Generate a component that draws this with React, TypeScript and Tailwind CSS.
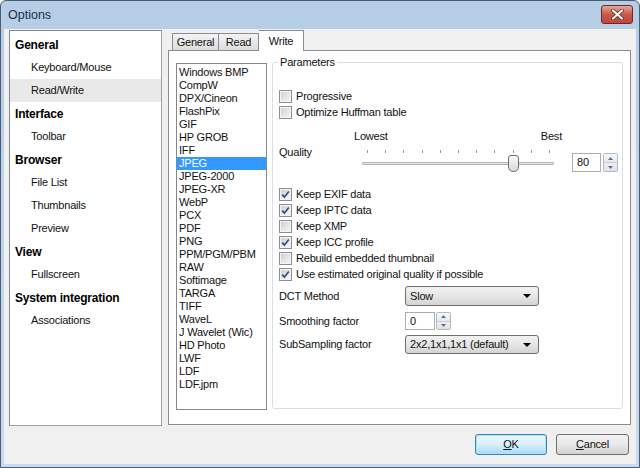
import React from "react";

const tree = [
  { label: "General", header: true },
  { label: "Keyboard/Mouse" },
  { label: "Read/Write", selected: true },
  { label: "Interface", header: true },
  { label: "Toolbar" },
  { label: "Browser", header: true },
  { label: "File List" },
  { label: "Thumbnails" },
  { label: "Preview" },
  { label: "View", header: true },
  { label: "Fullscreen" },
  { label: "System integration", header: true },
  { label: "Associations" },
];

const formats = [
  "Windows BMP",
  "CompW",
  "DPX/Cineon",
  "FlashPix",
  "GIF",
  "HP GROB",
  "IFF",
  "JPEG",
  "JPEG-2000",
  "JPEG-XR",
  "WebP",
  "PCX",
  "PDF",
  "PNG",
  "PPM/PGM/PBM",
  "RAW",
  "Softimage",
  "TARGA",
  "TIFF",
  "WaveL",
  "J Wavelet (Wic)",
  "HD Photo",
  "LWF",
  "LDF",
  "LDF.jpm",
];

const checks = [
  { label: "Keep EXIF data", checked: true },
  { label: "Keep IPTC data", checked: true },
  { label: "Keep XMP", checked: false },
  { label: "Keep ICC profile", checked: true },
  { label: "Rebuild embedded thumbnail", checked: false },
  { label: "Use estimated original quality if possible", checked: true },
];

function CheckBox({ label, checked }: { label: string; checked: boolean }) {
  return (
    <div className="flex h-[16px] items-center">
      <span className="flex h-[13px] w-[13px] items-center justify-center border border-[#8e8f8f] bg-white">
        <span className="flex h-[11px] w-[11px] items-center justify-center border border-[#f4f4f4] bg-linear-to-br from-[#cfd1d5] to-[#f6f6f6]">
          {checked && (
            <svg width="9" height="9" viewBox="0 0 9 9">
              <path d="M1.2 4.6 L3.4 7 L7.8 1.4" fill="none" stroke="#2d4a86" strokeWidth="1.6" />
            </svg>
          )}
        </span>
      </span>
      <span className="ml-[4px]">{label}</span>
    </div>
  );
}

function Spinner() {
  return (
    <div className="flex h-full w-[15px] flex-col rounded-[2px] border border-[#b4b9c0]">
      <div className="flex flex-1 items-center justify-center border-b border-[#c8ccd2] bg-linear-to-b from-[#f7f8fa] to-[#e6e9ee]">
        <svg width="5" height="3" viewBox="0 0 5 3">
          <path d="M0 3 L2.5 0 L5 3 Z" fill="#5b6f94" />
        </svg>
      </div>
      <div className="flex flex-1 items-center justify-center bg-linear-to-b from-[#eef0f3] to-[#dfe3e8]">
        <svg width="5" height="3" viewBox="0 0 5 3">
          <path d="M0 0 L2.5 3 L5 0 Z" fill="#5b6f94" />
        </svg>
      </div>
    </div>
  );
}

function Combo({ value }: { value: string }) {
  return (
    <div className="flex h-full w-[134px] items-center justify-between rounded-[3px] border border-[#707070] bg-linear-to-b from-[#f2f2f2] via-[#e6e6e6] to-[#d4d4d4] pl-[4px] pr-[7px]">
      <span>{value}</span>
      <svg width="8" height="4" viewBox="0 0 8 4">
        <path d="M0 0 L8 0 L4 4 Z" fill="#000" />
      </svg>
    </div>
  );
}

function Slider() {
  const ticks = Array.from({ length: 11 }, (_, i) => 5 + i * 18.2);
  return (
    <div className="relative h-[30px] w-[192px]">
      {ticks.map((x, i) => (
        <div key={i} className="absolute top-[4px] h-[3px] w-px bg-[#9a9a9a]" style={{ left: x }} />
      ))}
      <div className="absolute left-0 right-0 top-[16px] h-[3px] rounded-[1px] border border-[#b0b0b0] bg-[#e7eaea]" />
      <div className="absolute left-[146px] top-[9px] h-[17px] w-[11px] rounded-[3px] rounded-b-[5px] border border-[#707070] bg-linear-to-b from-[#fafafa] to-[#d8d8d8]" />
    </div>
  );
}

export default function App() {
  return (
    <div className="flex h-[468px] w-[640px] flex-col overflow-hidden rounded-t-[6px] border border-[#4b5d70] bg-linear-to-b from-[#b6cde6] to-[#c8dbef] font-['Liberation_Sans',Arial,sans-serif] text-[11px] tracking-[-0.2px] text-[#111]">
      {/* title bar */}
      <div className="relative flex h-[28px] shrink-0 items-center pl-[7px]">
        <span className="text-[12.5px] tracking-normal text-[#1b2f48]">Options</span>
        <div className="absolute left-[600px] top-[4px] flex h-[19px] w-[32px] items-center justify-center rounded-[3px] border border-[#6a2b25] bg-linear-to-b from-[#e6a69b] via-[#c9574a] to-[#c0473a]">
          <svg width="13" height="11" viewBox="0 0 13 11">
            <path d="M2 1.5 L11 9.5 M11 1.5 L2 9.5" stroke="#5a231e" strokeWidth="3.6" strokeLinecap="round" />
            <path d="M2 1.5 L11 9.5 M11 1.5 L2 9.5" stroke="#fff" strokeWidth="2.2" strokeLinecap="round" />
          </svg>
        </div>
      </div>

      {/* client area */}
      <div className="mx-[3px] mb-[3px] flex flex-1 flex-col bg-[#f0f0f0] px-[5px] pt-[1px]">
        <div className="flex">
          {/* tree */}
          <div className="h-[396px] w-[153px] shrink-0 border border-[#828790] border-r-[#a0a0a0] border-b-[#a0a0a0] bg-white pt-[2px]">
            {tree.map((t) => (
              <div
                key={t.label}
                className={`flex h-[23px] items-center ${
                  t.header ? "pl-[5px] text-[12px] font-bold text-black" : "pl-[21px]"
                } ${t.selected ? "bg-[#e9e9e9]" : ""}`}
              >
                {t.label}
              </div>
            ))}
          </div>

          {/* tab control */}
          <div className="ml-[6px] flex w-[464px] flex-col">
            <div className="flex h-[20px] items-end pl-[4px]">
              <div className="flex h-[17px] w-[47px] items-center justify-center border border-b-0 border-[#898c95] bg-linear-to-b from-[#f4f4f4] to-[#dcdcdc]">
                General
              </div>
              <div className="flex h-[17px] w-[40px] items-center justify-center border border-b-0 border-l-0 border-[#898c95] bg-linear-to-b from-[#f4f4f4] to-[#dcdcdc]">
                Read
              </div>
              <div className="relative z-10 -mb-px flex h-[21px] w-[45px] items-start justify-center border border-b-0 border-l-0 border-[#898c95] bg-white pt-[2px]">
                Write
              </div>
            </div>
            <div className="flex h-[375px] border border-[#898c95] bg-white pl-[7px] pt-[11px]">
              {/* listbox */}
              <div className="mt-[1px] h-[347px] w-[91px] shrink-0 border border-[#828790] pt-[2px]">
                {formats.map((f) => (
                  <div
                    key={f}
                    className={`flex h-[13px] items-center pl-[2px] ${
                      f === "JPEG" ? "bg-[#3399ff] text-white" : ""
                    }`}
                  >
                    {f}
                  </div>
                ))}
              </div>

              {/* group box */}
              <div className="relative ml-[5px] h-[347px] w-[351px] rounded-[3px] border border-[#d5dfe5] pl-[6px] pt-[25px]">
                <span className="absolute -top-[7px] left-[5px] bg-white px-[2px] leading-[13px]">
                  Parameters
                </span>
                <CheckBox label="Progressive" checked={false} />
                <CheckBox label="Optimize Huffman table" checked={false} />

                <div className="mt-[10px] flex h-[12px] items-center">
                  <span className="ml-[75px]">Lowest</span>
                  <span className="ml-auto mr-[60px]">Best</span>
                </div>

                <div className="mt-[4px] flex h-[30px] items-start">
                  <span className="w-[83px] leading-[13px]">Quality</span>
                  <Slider />
                  <div className="ml-[18px] mt-[7px] flex h-[19px]">
                    <div className="flex h-full w-[29px] items-center border border-[#abadb3] bg-white pl-[4px]">
                      80
                    </div>
                    <div className="ml-[2px] h-full">
                      <Spinner />
                    </div>
                  </div>
                </div>

                <div className="mt-[10px]">
                  {checks.map((c) => (
                    <CheckBox key={c.label} label={c.label} checked={c.checked} />
                  ))}
                </div>

                <div className="mt-[4px] flex h-[20px] items-center">
                  <span className="w-[126px]">DCT Method</span>
                  <Combo value="Slow" />
                </div>

                <div className="mt-[6px] flex h-[18px] items-center">
                  <span className="w-[126px]">Smoothing factor</span>
                  <div className="flex h-full">
                    <div className="flex h-full w-[30px] items-center border border-[#abadb3] bg-white pl-[4px]">
                      0
                    </div>
                    <div className="ml-[1px] h-full">
                      <Spinner />
                    </div>
                  </div>
                </div>

                <div className="mt-[5px] flex h-[19px] items-center">
                  <span className="w-[126px]">SubSampling factor</span>
                  <Combo value="2x2,1x1,1x1 (default)" />
                </div>
              </div>
            </div>
          </div>
        </div>

        {/* buttons */}
        <div className="mt-[8px] flex justify-end gap-[9px] pr-[2px]">
          <button className="h-[21px] w-[72px] rounded-[3px] border border-[#3c7fb1] bg-linear-to-b from-[#eaf6fd] via-[#d9f0fc] to-[#a7d9f5] shadow-[inset_0_0_0_1px_#aee4fa]">
            <span className="underline">O</span>K
          </button>
          <button className="h-[21px] w-[73px] rounded-[3px] border border-[#707070] bg-linear-to-b from-[#f2f2f2] via-[#e8e8e8] to-[#d2d2d2]">
            <span className="underline">C</span>ancel
          </button>
        </div>
      </div>
    </div>
  );
}
